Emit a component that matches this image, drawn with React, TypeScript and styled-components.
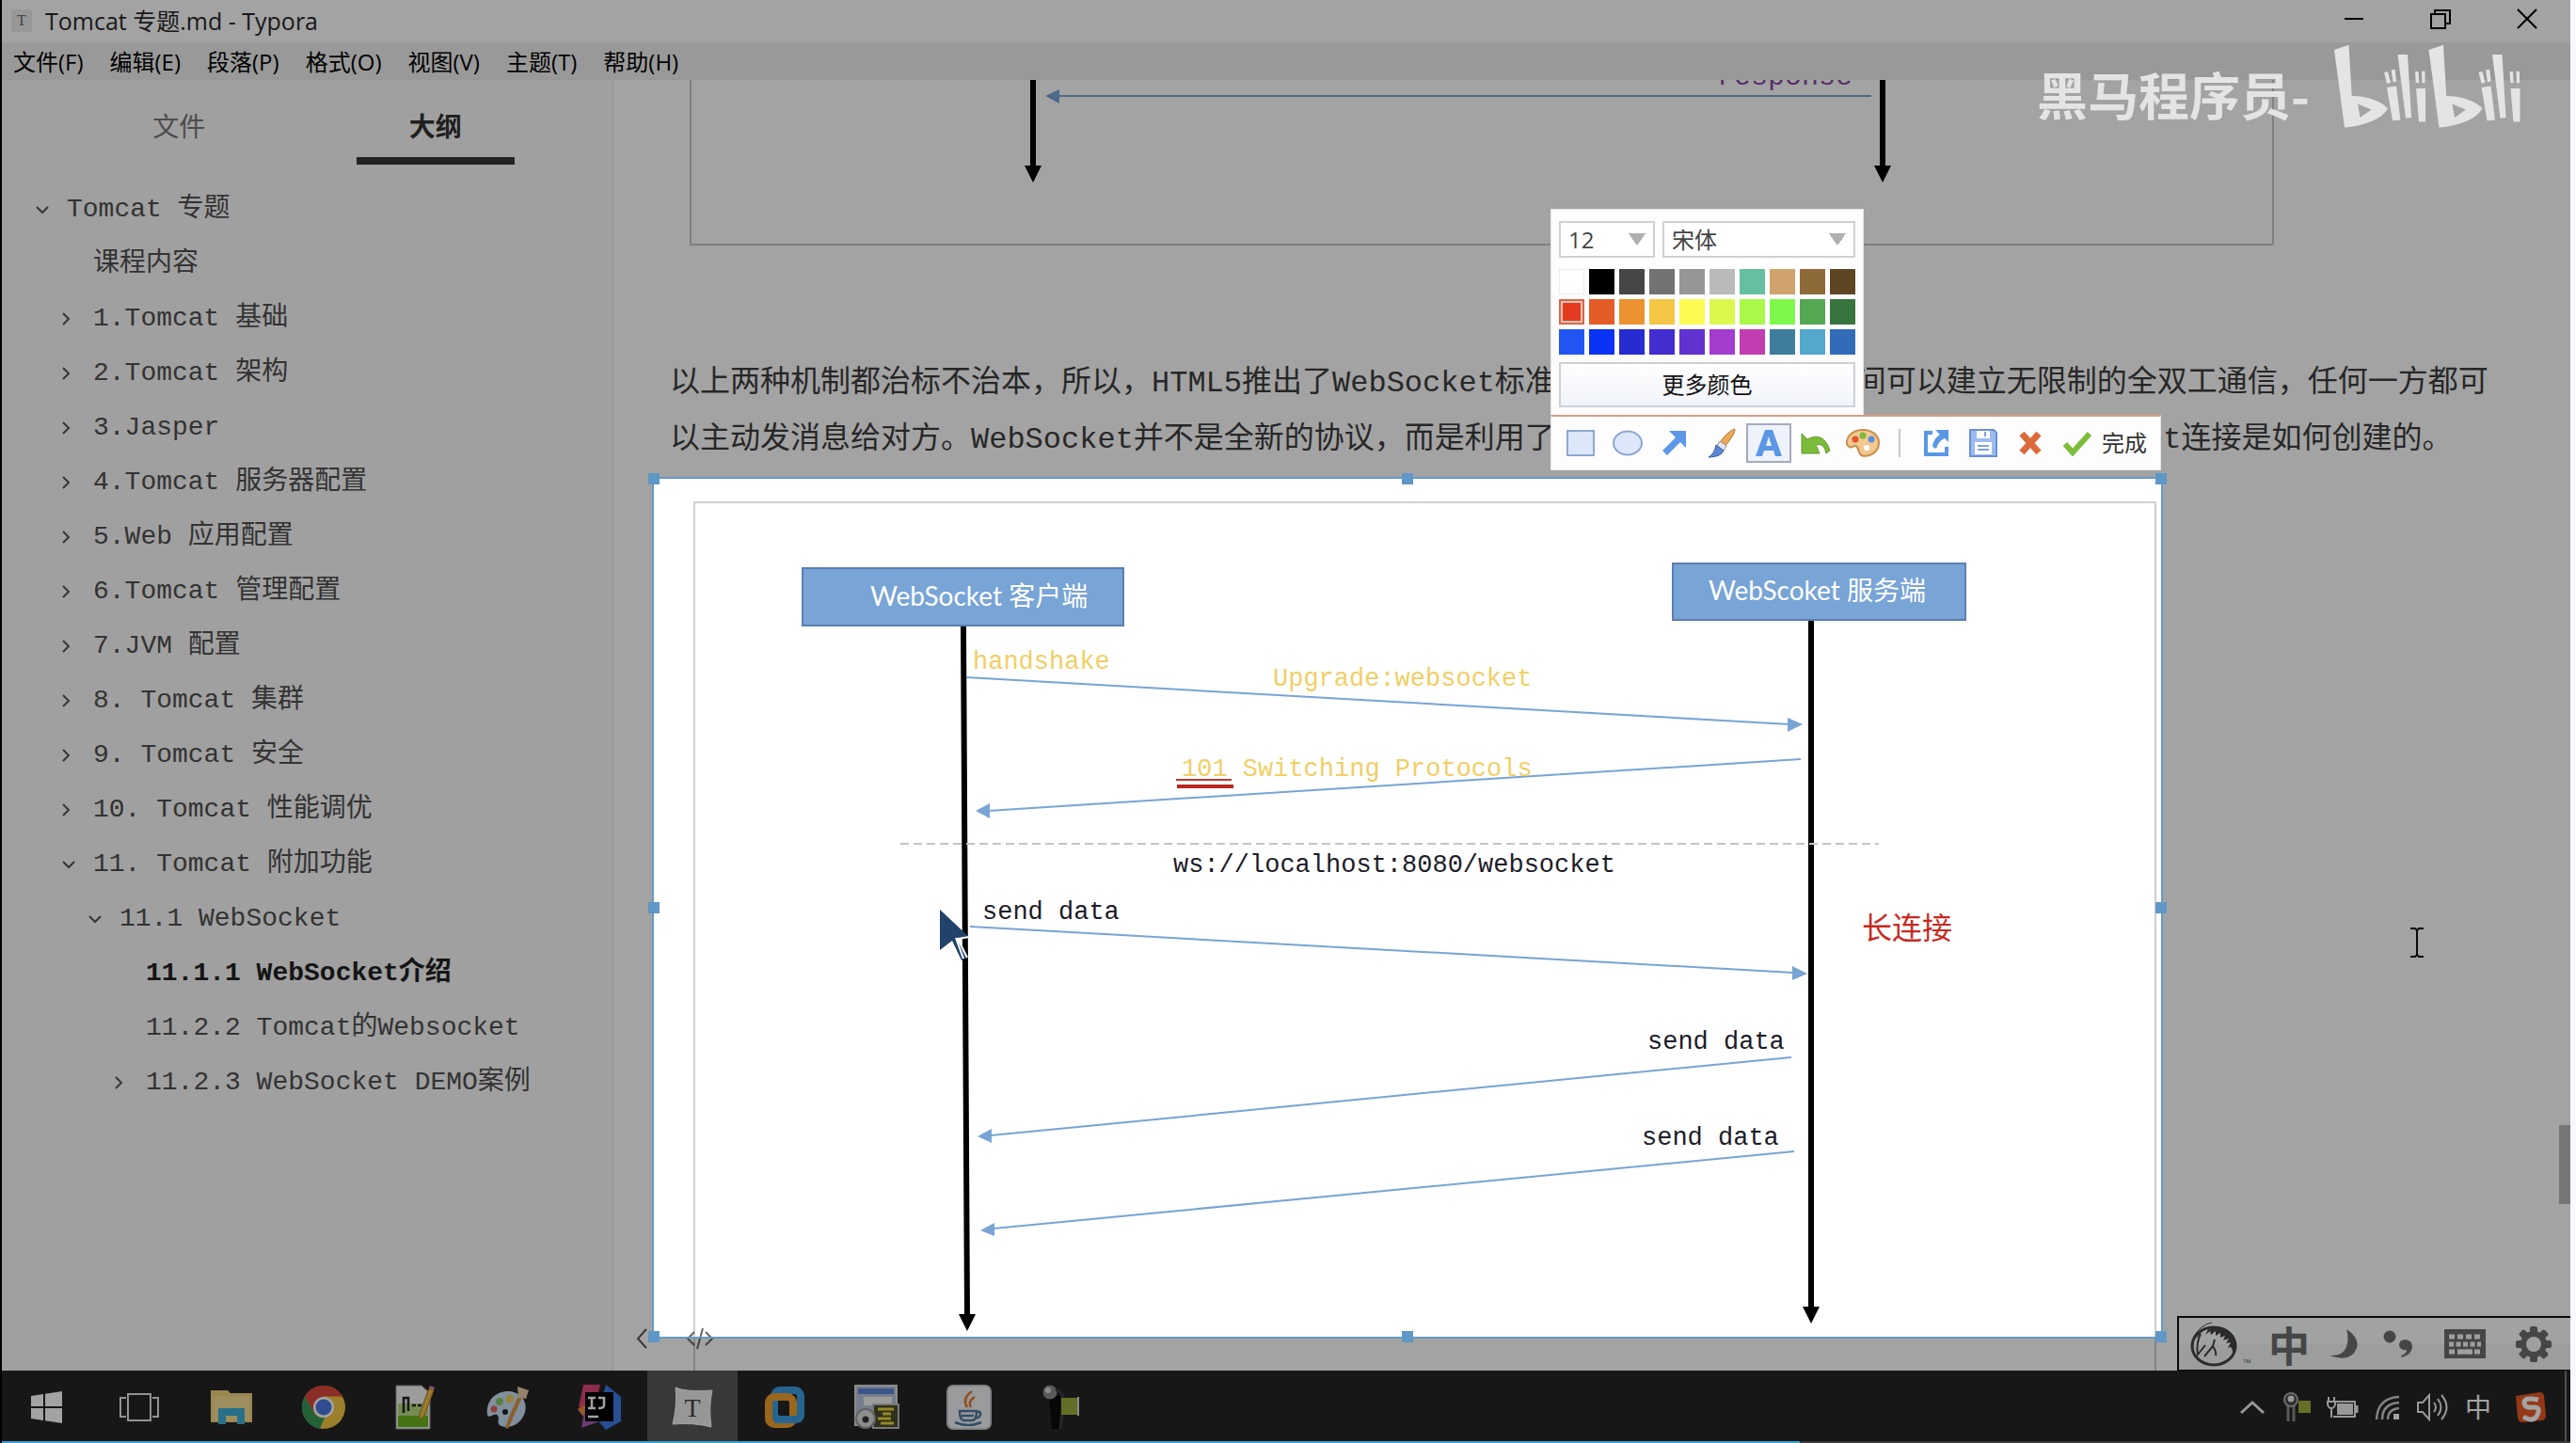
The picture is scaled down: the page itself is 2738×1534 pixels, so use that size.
import React from 'react';
import styled, { createGlobalStyle, css } from 'styled-components';

const UI = `"Open Sans", "Noto Sans CJK SC", sans-serif`;
const MONO = `"Liberation Mono", "Noto Sans CJK SC", monospace`;
const BLUE = '#78a4d6';
const INK = '#1c1c28';
const GOLD = '#f0cf66';

const Global = createGlobalStyle`
  * { box-sizing: border-box; }
  body { margin: 0; font-family: ${UI}; }
  button { border: 0; padding: 0; margin: 0; background: none; font: inherit; color: inherit; }
  svg { display: block; flex: none; }
`;

/* ---------- frame ---------- */

const Desktop = styled.div`
  position: relative;
  display: flex;
  flex-direction: column;
  height: 100vh;
  overflow: hidden;
  background: #fff;
  border-left: 2px solid #000;
  border-right: 6px solid #f8f9fd;
`;

const TitleBar = styled.header`
  display: flex;
  align-items: flex-start;
  height: 45px;
  padding-left: 10px;
  background: #fff;
  flex: none;
`;

const AppMark = styled.span`
  width: 22px;
  height: 24px;
  margin: 10px 14px 0 0;
  border-radius: 3px;
  background: #ececec;
  color: #666;
  font: 16px/24px "Liberation Serif", serif;
  text-align: center;
`;

const Title = styled.h1`
  flex: 1;
  margin: 0;
  font-size: 25px;
  line-height: 45px;
  font-weight: 400;
  color: #2a2a2a;
`;

const WindowButton = styled.button`
  display: flex;
  justify-content: center;
  align-items: center;
  width: 92px;
  height: 40px;
`;

const MenuBar = styled.nav`
  display: flex;
  flex: none;
  height: 40px;
  background: #f0f0f0;
`;

const MenuItem = styled.button`
  padding: 2px 16px 0 12px;
  font-size: 24px;
  line-height: 38px;
  color: #000;
`;

const Workspace = styled.div`
  display: flex;
  flex: 1;
  min-height: 0;
`;

/* ---------- sidebar ---------- */

const Sidebar = styled.aside`
  flex: none;
  width: 650px;
  background: #fafafa;
  border-right: 1px solid #e4e4e4;
`;

const Tabs = styled.div`
  display: flex;
  height: 109px;
  padding: 0 52px;
`;

const Tab = styled.button<{ $on?: boolean }>`
  display: flex;
  flex: 1;
  flex-direction: column;
  align-items: center;
  padding-top: 28px;
  font-size: 28px;
  line-height: 42px;
  font-weight: ${(p) => (p.$on ? 700 : 400)};
  color: ${(p) => (p.$on ? '#333' : '#777')};
  &::after {
    content: '';
    width: 168px;
    height: 8px;
    margin-top: 12px;
    background: ${(p) => (p.$on ? '#383838' : 'transparent')};
  }
`;

const Outline = styled.ul`
  margin: 0;
  padding: 0;
  list-style: none;
`;

const OutlineRow = styled.li<{ $level: number; $on?: boolean }>`
  display: flex;
  align-items: center;
  height: 58px;
  padding-left: ${(p) => 36 + p.$level * 28}px;
  font-family: ${MONO};
  font-size: 28px;
  line-height: 40px;
  white-space: pre;
  color: ${(p) => (p.$on ? '#222' : '#505050')};
  font-weight: ${(p) => (p.$on ? 700 : 400)};
`;

const Twisty = styled.span`
  width: 33px;
  height: 14px;
  flex: none;
`;

const RowLink = styled.a`
  color: inherit;
  text-decoration: none;
`;

/* ---------- document ---------- */

const Page = styled.main`
  position: relative;
  flex: 1;
  min-width: 0;
  padding: 0 50px 0 60px;
  overflow: hidden;
`;

const TopFigure = styled.figure`
  width: 1684px;
  height: 176px;
  margin: 0 0 117px 21px;
  border: 2px solid #c8c8c8;
  border-top: 0;
`;

const Paragraph = styled.p`
  margin: 0 0 35px;
  font-family: ${MONO};
  font-size: 32px;
  line-height: 60px;
  color: #3e3e3e;
`;

const MainFigure = styled.figure`
  width: 1555px;
  margin: 0 0 0 25px;
  border: 2px solid #cfcfcf;
`;

const BoxLabel = styled.text`
  font-family: "Lato", "Noto Sans CJK SC", sans-serif;
  font-size: 28px;
  fill: #fff;
`;

const Message = styled.text<{ $big?: boolean }>`
  font-family: ${MONO};
  font-size: ${(p) => (p.$big ? 30 : 27)}px;
  white-space: pre;
`;

const Note = styled.text`
  font-family: "Noto Sans CJK SC", sans-serif;
  font-size: 32px;
  fill: #c8291f;
`;

const PageTools = styled.div`
  position: absolute;
  left: 24px;
  bottom: 22px;
  display: flex;
  gap: 41px;
`;

const Track = styled.div`
  display: flex;
  flex: none;
  flex-direction: column;
  width: 12px;
  &::before { content: ''; flex: 1111; }
  &::after { content: ''; flex: 177; }
`;

const Thumb = styled.div`
  height: 84px;
  background: #b9b9b9;
`;

/* ---------- taskbar ---------- */

const Taskbar = styled.footer`
  display: flex;
  flex: none;
  align-items: stretch;
  height: 77px;
  background: #242424;
  color: #fff;
`;

const TaskList = styled.div`
  display: flex;
  flex: 1;
  gap: 2px;
`;

const TaskButton = styled.button<{ $on?: boolean }>`
  display: flex;
  justify-content: center;
  align-items: center;
  width: 96px;
  background: ${(p) => (p.$on ? '#585858' : 'none')};
`;

const Tray = styled.div`
  display: flex;
  padding-right: 4px;
`;

const TrayButton = styled.button<{ $wide?: boolean }>`
  display: flex;
  justify-content: center;
  align-items: center;
  width: ${(p) => (p.$wide ? 64 : 48)}px;
  font-size: 28px;
  line-height: 40px;
`;

const TrayEdge = styled.div`
  width: 2px;
  margin-left: 4px;
  background: #777;
`;

const ImeBar = styled.div`
  position: absolute;
  right: 0;
  bottom: 77px;
  display: grid;
  grid-template-columns: 88px 58px 58px 58px 84px 62px;
  height: 58px;
  padding-right: 8px;
  border: 2px solid #111;
  border-right: 0;
  border-bottom-width: 1px;
  background: linear-gradient(#fcfffe 50%, #f4f7f6 50%);
  color: #6c6e6e;
`;

const ImeButton = styled.button`
  display: flex;
  justify-content: center;
  align-items: center;
  gap: 5px;
  font: 700 44px/50px "Noto Sans CJK SC", sans-serif;
`;

const Trade = styled.span`
  align-self: flex-end;
  font: 11px/14px ${UI};
`;

const VideoProgress = styled.div`
  position: absolute;
  left: 0;
  right: 0;
  bottom: 0;
  height: 2px;
  background: linear-gradient(90deg, #3a9fd6 70%, #3c3c3c 70%);
`;

/* ---------- screenshot selection ---------- */

const Selection = styled.section`
  position: absolute;
  left: 691px;
  top: 507px;
  width: 1606px;
  height: 916px;
  border: 2px solid #6699c6;
  box-shadow: 0 0 0 3000px rgba(0, 0, 0, 0.36);
`;

const Handle = styled.i<{ $x: number; $y: number }>`
  position: absolute;
  left: ${(p) => p.$x}%;
  top: ${(p) => p.$y}%;
  width: 12px;
  height: 12px;
  margin: -6px;
  background: #5f97c6;
`;

const Tools = styled.div`
  position: absolute;
  right: 0;
  bottom: calc(100% + 9px);
  width: 649px;
`;

const StylePanel = styled.div`
  display: flex;
  flex-direction: column;
  width: 333px;
  padding: 12px 8px 8px;
  background: #fdfdfe;
  border: 1px solid #e6e6e6;
  border-bottom: 0;
`;

const Pickers = styled.div`
  display: grid;
  grid-template-columns: 102px 1fr;
  gap: 8px;
  margin-bottom: 12px;
`;

const Picker = styled.select`
  appearance: none;
  height: 39px;
  padding: 0 8px;
  border: 2px solid #cfd1d6;
  border-radius: 0;
  font: 24px/34px ${UI};
  color: #444;
  background:
    linear-gradient(to bottom right, #aeb0b2 50%, transparent 51%) right 8px center / 9px 13px no-repeat,
    linear-gradient(to bottom left, #aeb0b2 50%, transparent 51%) right 17px center / 9px 13px no-repeat,
    #fff;
`;

const Swatches = styled.div`
  display: grid;
  grid-template-columns: repeat(10, 27px);
  gap: 5px;
  margin-bottom: 8px;
`;

const Swatch = styled.input<{ $c: string }>`
  appearance: none;
  width: 27px;
  height: 27px;
  margin: 0;
  background: ${(p) => p.$c};
  ${(p) =>
    p.$c === '#ffffff' &&
    css`
      border: 1px solid #ececf0;
    `}
  &:checked {
    border: 2px solid #d9664a;
    box-shadow: inset 0 0 0 2px #f3c4b6;
  }
`;

const MoreColors = styled.button`
  height: 48px;
  border: 2px solid #cdd0d6;
  background: linear-gradient(#fff, #f1f4fa);
  font-size: 24px;
  line-height: 42px;
  color: #111;
`;

const ToolRow = styled.div`
  display: flex;
  align-items: center;
  gap: 2px;
  height: 59px;
  padding: 0 6px 0 7px;
  border: 1px solid #e6e6e6;
  border-top: 2px solid #dc9c84;
  background: #fdfdfe;
`;

const ToolButton = styled.button<{ $on?: boolean }>`
  display: flex;
  flex: none;
  justify-content: center;
  align-items: center;
  gap: 10px;
  min-width: 48px;
  height: 42px;
  padding: 0;
  border: 2px solid ${(p) => (p.$on ? '#a3abbd' : 'transparent')};
  background: ${(p) => (p.$on ? '#eef2fa' : 'none')};
  font-size: 24px;
  line-height: 36px;
  color: #333;
`;

const ToolRule = styled.i`
  width: 2px;
  height: 30px;
  margin: 0 12px;
  background: #c6c8cc;
`;

const Done = styled(ToolButton)`
  padding-left: 6px;
`;

const Watermark = styled.div`
  position: absolute;
  right: 52px;
  top: 47px;
  display: flex;
  align-items: flex-start;
  gap: 26px;
  font: 700 54px/56px "Noto Sans CJK SC", sans-serif;
  color: #e4e4e4;
`;

const Channel = styled.span`
  padding-top: 25px;
`;

const Pointer = styled.svg`
  position: absolute;
  left: 304px;
  top: 458px;
`;

const Caret = styled.svg`
  position: absolute;
  left: 2560px;
  top: 986px;
`;

/* ---------- data ---------- */

const MENUS = ['文件(F)', '编辑(E)', '段落(P)', '格式(O)', '视图(V)', '主题(T)', '帮助(H)'];

type Row = { text: string; level: number; fold?: 'open' | 'shut'; on?: boolean };
const ROWS: Row[] = [
  { text: 'Tomcat 专题', level: 0, fold: 'open' },
  { text: '课程内容', level: 1 },
  { text: '1.Tomcat 基础', level: 1, fold: 'shut' },
  { text: '2.Tomcat 架构', level: 1, fold: 'shut' },
  { text: '3.Jasper', level: 1, fold: 'shut' },
  { text: '4.Tomcat 服务器配置', level: 1, fold: 'shut' },
  { text: '5.Web 应用配置', level: 1, fold: 'shut' },
  { text: '6.Tomcat 管理配置', level: 1, fold: 'shut' },
  { text: '7.JVM 配置', level: 1, fold: 'shut' },
  { text: '8. Tomcat 集群', level: 1, fold: 'shut' },
  { text: '9. Tomcat 安全', level: 1, fold: 'shut' },
  { text: '10. Tomcat 性能调优', level: 1, fold: 'shut' },
  { text: '11. Tomcat 附加功能', level: 1, fold: 'open' },
  { text: '11.1 WebSocket', level: 2, fold: 'open' },
  { text: '11.1.1 WebSocket介绍', level: 3, on: true },
  { text: '11.2.2 Tomcat的Websocket', level: 3 },
  { text: '11.2.3 WebSocket DEMO案例', level: 3, fold: 'shut' },
];

const COLORS = [
  '#ffffff', '#000000', '#464646', '#727272', '#969696', '#bababa', '#67bfa2', '#d0a26c', '#8e6a38', '#5e4622',
  '#e43a20', '#e45c28', '#ec9232', '#f4c644', '#fdfa54', '#dcf84e', '#aaf84a', '#7ef84a', '#54a852', '#38743e',
  '#2256f4', '#0a32f4', '#262cd0', '#422ecf', '#6032cf', '#a43cd0', '#c23eb2', '#3c7e9c', '#54a8cb', '#326cb8',
];

/* ---------- drawings ---------- */

const Chevron = ({ open }: { open: boolean }) => (
  <svg width="14" height="14" viewBox="0 0 14 14" fill="none" stroke="#555" strokeWidth="2">
    <path d={open ? 'M1 4l6 6 6-6' : 'M1 1l6 6-6 6'} />
  </svg>
);

const TopDiagram = () => (
  <svg width="1680" height="174" viewBox="735 85 1680 174">
    <Message $big x="1825" y="90" fill="#8a4aa8">response</Message>
    <g stroke="#000" strokeWidth="6">
      <path d="M1098 85V178M2001 85V178" />
    </g>
    <path d="M1089 176h18l-9 18zM1992 176h18l-9 18z" />
    <path d="M1124 102H1989" stroke={BLUE} strokeWidth="2" />
    <path d="M1111 102l15-7v15z" fill={BLUE} />
  </svg>
);

const SocketDiagram = () => (
  <svg width="1551" height="980" viewBox="739 535 1551 980">
    <g stroke="#000" strokeWidth="6">
      <path d="M1024 666L1028 1399M1925 659V1392" />
    </g>
    <path d="M1019 1397h18l-9 18zM1916 1389h18l-9 18z" />
    <g fill={BLUE} stroke="#5b7fb0" strokeWidth="2">
      <path d="M853 604h341v61H853zM1778 599h311v60H1778z" />
    </g>
    <BoxLabel x="925" y="644">WebSocket 客户端</BoxLabel>
    <BoxLabel x="1816" y="638">WebScoket 服务端</BoxLabel>
    <g stroke={BLUE} strokeWidth="2">
      <path d="M1027 720L1902 770M1914 807L1050 862M1031 985L1906 1034M1904 1124L1053 1207M1907 1224L1056 1306" />
    </g>
    <g fill={BLUE}>
      <path d="M1916 770l-16-7v15zM1037 862l15-8v16zM1921 1035l-16-8v15zM1039 1208l15-8v15zM1042 1308l15-8v14z" />
    </g>
    <path d="M957 897H1997" stroke="#c4c4c4" strokeWidth="2" strokeDasharray="9 5" />
    <Message x="1034" y="711" fill={GOLD}>handshake</Message>
    <Message x="1353" y="729" fill={GOLD}>Upgrade:websocket</Message>
    <Message x="1256" y="825" fill={GOLD}>101 Switching Protocols</Message>
    <path d="M1250 829h59" stroke="#c0392f" strokeWidth="2" />
    <path d="M1251 836h60" stroke="#b8281f" strokeWidth="4" />
    <Message x="1247" y="927" fill={INK}>ws://localhost:8080/websocket</Message>
    <Message x="1044" y="977" fill={INK}>send data</Message>
    <Message x="1751" y="1115" fill={INK}>send data</Message>
    <Message x="1745" y="1217" fill={INK}>send data</Message>
    <Note x="1979" y="998">长连接</Note>
  </svg>
);

const Bili = () => (
  <svg width="199" height="90" viewBox="0 0 199 90" fill="#e4e4e4" role="img" aria-label="bilibili">
    {[0, 100.5].map((dx) => (
      <g key={dx} transform={`translate(${dx} 0)`}>
        <path fillRule="evenodd" d="M0 6L15.500 .7L18.700 55C36 55 50 61 57 68C52 79 32 87 11 88.500ZM25 63.500L27.500 78L39.500 69.500Z" />
        <path d="M56 46l10-1.500 4.400 36-8.400.8zM53 30l4-1 3 12-4 .8zM60.600 27.500l4-.8 1.500 13-3.600.4zM67.500 11h10.500l4 67-6 .8zM87 47h10v35.500h-7zM86 29h3.500l.6 12h-3.300zM93 28.700h3.500v12.500h-3z" />
      </g>
    ))}
  </svg>
);

const Gear = () => (
  <svg width="38" height="38" viewBox="0 0 38 38">
    <g fill="currentColor">
      {[0, 45, 90, 135].map((a) => (
        <rect key={a} x="15" y="0" width="8" height="38" rx="2" transform={`rotate(${a} 19 19)`} />
      ))}
      <circle cx="19" cy="19" r="14" />
    </g>
    <circle cx="19" cy="19" r="8" fill="#f8fbfa" />
  </svg>
);

const TASKS: { name: string; on?: boolean; art: React.ReactNode }[] = [
  {
    name: '开始',
    art: <svg width="34" height="34" viewBox="0 0 34 34" fill="#fff"><path d="M0 5l13-2v13H0zM15 2.700L33 0v16H15zM0 18h13v13L0 29zM15 18h18v16l-18-2.700z" /></svg>,
  },
  {
    name: '任务视图',
    art: <svg width="42" height="30" viewBox="0 0 42 30" fill="none" stroke="#e4e4e4" strokeWidth="2"><path d="M9 1h24v28H9zM7 5H1v20h6M35 5h6v20h-6" /></svg>,
  },
  {
    name: '文件资源管理器',
    art: <svg width="44" height="38" viewBox="0 0 44 38"><path d="M0 4V1h18l3 3h23v31H0z" fill="#f0d27c" /><path d="M2 7h40v26H2z" fill="#f7df94" /><path d="M8 20h28v17h-8V28H16v9H8z" fill="#3fb0d8" /></svg>,
  },
  {
    name: 'Chrome',
    art: <svg width="46" height="46" viewBox="0 0 46 46"><circle cx="23" cy="23" r="23" fill="#f2c744" /><path d="M3 11.500A23 23 0 0 1 43 11.500H23L13 29z" fill="#d9483b" /><path d="M3 11.500L13 29q4 6 11 5l-5 11.800A23 23 0 0 1 3 11.500z" fill="#38995a" /><circle cx="23" cy="23" r="11" fill="#fff" /><circle cx="23" cy="23" r="8.500" fill="#4a78e0" /></svg>,
  },
  {
    name: 'Notepad++',
    art: <svg width="44" height="48" viewBox="0 0 44 48"><path d="M1 1h27l9 8v38H1z" fill="#f4f4f4" stroke="#999" /><path d="M3 32h32v13H3z" fill="#6cb81e" /><path d="M3 20h32v13H3z" fill="#b8dc84" /><path d="M9 30V14h5v14M18 22h4M24 22h4" fill="none" stroke="#222" strokeWidth="2.500" /><path d="M26 31l10-27 5 2-10 27-5 5z" fill="#eebf45" stroke="#a6762a" /><path d="M36 4l1-3 5 2-1 3z" fill="#d98a9a" /></svg>,
  },
  {
    name: '画图',
    art: <svg width="48" height="48" viewBox="0 0 48 48"><path d="M2 32C0 16 12 6 26 7c14 2 20 14 15 25-4 10-15 15-24 12-7-3 0-9-5-12-4-2-8 5-10 0z" fill="#c8e2f4" /><circle cx="9" cy="26" r="3.500" fill="#e0675c" /><circle cx="15" cy="18" r="4" fill="#8cc86a" /><circle cx="26" cy="15" r="4.500" fill="#f0d060" /><circle cx="21" cy="29" r="3" fill="#242424" /><path d="M36 10l4 1-16 36-3-1 4-12z" fill="#dc9448" /><path d="M34 2l12 4-3 9-8-1z" fill="#e8cda4" /></svg>,
  },
  {
    name: 'IntelliJ IDEA',
    art: <svg width="48" height="48" viewBox="0 0 48 48"><path d="M6 0h18l-6 24H1z" fill="#e0447a" /><path d="M0 26l10-6 4 12-8 2z" fill="#f08a3c" /><path d="M4 46l4-22 18 14z" fill="#b05ab8" /><path d="M30 0l16 13v26l-16 9-10-12z" fill="#3c7ce8" /><rect x="8" y="8" width="30" height="31" fill="#000" /><path d="M11 14h8m-4 0v11m-4 0h8M22 14h6v8q0 3-6 3M11 34h11" fill="none" stroke="#fff" strokeWidth="2.500" /></svg>,
  },
  {
    name: 'Typora',
    on: true,
    art: <svg width="44" height="44" viewBox="0 0 44 44"><path d="M4 1q10 5 39 3-4 18-1 39-18-5-41-3 5-20 3-39z" fill="#ededed" stroke="#fff" /><text x="22" y="32" textAnchor="middle" fontFamily="Liberation Serif, serif" fontSize="28" fill="#444">T</text></svg>,
  },
  {
    name: 'VMware',
    art: <svg width="44" height="46" viewBox="0 0 44 46" fill="none" strokeWidth="8"><rect x="11" y="5" width="28" height="31" rx="6" stroke="#3c9fe0" /><rect x="5" y="12" width="26" height="29" rx="6" stroke="#f0a02c" /><path d="M11 36h22q6 0 6-6V14" stroke="#3c9fe0" /></svg>,
  },
  {
    name: '安装程序',
    art: <svg width="48" height="48" viewBox="0 0 48 48"><path d="M1 1h44v42H1z" fill="#b9c4dc" stroke="#dcdcdc" strokeWidth="2" /><path d="M4 4h38v6H4z" fill="#5f86d8" /><path d="M10 13h30v9H10z" fill="#f4f4f4" /><path d="M20 21h27v25H20z" fill="#4c4c30" stroke="#bbb" strokeWidth="2" /><path d="M25 26h17M30 31h9M25 36h14M28 41h14" stroke="#e8d83c" strokeWidth="3" /><circle cx="12" cy="36" r="10" fill="#ddd" stroke="#999" strokeWidth="2" /><circle cx="12" cy="37" r="3.500" fill="#333" /></svg>,
  },
  {
    name: 'Java',
    art: <svg width="48" height="48" viewBox="0 0 48 48"><rect x="1" y="1" width="46" height="46" rx="6" fill="#f0f2f4" stroke="#c8ccd0" strokeWidth="2" /><g fill="none" strokeWidth="2.500"><path d="M27 7q-11 8-5 17M30 13q-8 5-4 11" stroke="#e07a34" /><path d="M14 28h18q0 9-4 10H18q-4-1-4-10zM32 29q5-1 4 3t-6 3M9 40q14 6 28 0M16 33h13" stroke="#50789e" /></g></svg>,
  },
  {
    name: '录音机',
    art: <svg width="40" height="48" viewBox="0 0 40 48"><path d="M7 14l12-3-1 36h-8z" fill="#0c0c0c" /><circle cx="8" cy="8" r="7.500" fill="#8c8c8c" /><circle cx="6" cy="6" r="3" fill="#dcdcdc" /><path d="M14 5q10 3 8 20l-3 22" fill="none" stroke="#3c3c3c" strokeWidth="3" /><rect x="20" y="14" width="18" height="18" fill="#9cae3c" /><path d="M38 13v20" stroke="#ddd" strokeWidth="2" /></svg>,
  },
];

const TRAY: { name: string; art: React.ReactNode }[] = [
  { name: '显示隐藏的图标', art: <svg width="26" height="16" viewBox="0 0 26 16" fill="none" stroke="#eee" strokeWidth="3"><path d="M1 14L13 3l12 11" /></svg> },
  { name: '录音', art: <svg width="32" height="32" viewBox="0 0 32 32"><rect x="17" y="9" width="13" height="13" fill="#a3ae3e" /><path d="M6 14v17M12 14v17" stroke="#8c8c8c" strokeWidth="3" /><circle cx="9" cy="8" r="7" fill="#444" stroke="#aaa" strokeWidth="2" /><circle cx="9" cy="7" r="3.500" fill="#eee" /></svg> },
  { name: '电池', art: <svg width="34" height="24" viewBox="0 0 34 24" fill="none" stroke="#eee" strokeWidth="2"><path d="M10 6h20v16H7M5 12v11M2 1v5M8 1v5M1 6h8v3q-1 4-4 4t-4-4z" /><path d="M12 9h15v10H12z" fill="#eee" /><path d="M32 10v8" strokeWidth="3" /></svg> },
  { name: '网络', art: <svg width="28" height="28" viewBox="0 0 28 28" fill="none" stroke="#ccc" strokeWidth="2.500"><path d="M2 27Q3 4 26 3M8 27Q8 10 26 9M14 27Q14 16 26 15" /><rect x="20" y="21" width="6" height="6" fill="#fff" stroke="none" /></svg> },
  { name: '音量', art: <svg width="34" height="30" viewBox="0 0 34 30" fill="none" stroke="#eee" strokeWidth="2"><path d="M1 10h5l7-8v26l-7-8H1zM18 10q4 5 0 10M22 6q7 9 0 18M26 2q11 13 0 26" /></svg> },
];

const Arrow = () => (
  <svg width="28" height="28" viewBox="0 0 28 28"><path d="M8 1h18v18l-6-6L6 27l-5-5L15 8z" fill="#5b97e6" /></svg>
);

export default function App() {
  return (
    <>
      <Global />
      <Desktop>
        <TitleBar>
          <AppMark>T</AppMark>
          <Title>Tomcat 专题.md - Typora</Title>
          <WindowButton aria-label="最小化">
            <svg width="22" height="22" viewBox="0 0 22 22"><path d="M1 11h20" stroke="#000" strokeWidth="2" /></svg>
          </WindowButton>
          <WindowButton aria-label="还原">
            <svg width="22" height="22" viewBox="0 0 22 22" fill="none" stroke="#000" strokeWidth="2"><path d="M1 6h15v15H1zM5 6V2h16v14h-5" /></svg>
          </WindowButton>
          <WindowButton aria-label="关闭">
            <svg width="22" height="22" viewBox="0 0 22 22" stroke="#000" strokeWidth="2"><path d="M1 1l20 20M21 1L1 21" /></svg>
          </WindowButton>
        </TitleBar>
        <MenuBar>
          {MENUS.map((m) => (
            <MenuItem key={m}>{m}</MenuItem>
          ))}
        </MenuBar>

        <Workspace>
          <Sidebar>
            <Tabs>
              <Tab>文件</Tab>
              <Tab $on>大纲</Tab>
            </Tabs>
            <Outline>
              {ROWS.map((r) => (
                <OutlineRow key={r.text} $level={r.level} $on={r.on}>
                  <Twisty>{r.fold && <Chevron open={r.fold === 'open'} />}</Twisty>
                  <RowLink href="#">{r.text}</RowLink>
                </OutlineRow>
              ))}
            </Outline>
          </Sidebar>
          <Page>
            <TopFigure><TopDiagram /></TopFigure>
            <Paragraph>
              以上两种机制都治标不治本，所以，HTML5推出了WebSocket标准，使浏览器和服务器之间可以建立无限制的全双工通信，任何一方都可以主动发消息给对方。WebSocket并不是全新的协议，而是利用了HTTP协议来建立连接。我们来看看WebSocket连接是如何创建的。
            </Paragraph>
            <MainFigure><SocketDiagram /></MainFigure>
            <PageTools>
              <svg width="12" height="24" viewBox="0 0 12 24" fill="none" stroke="#555" strokeWidth="2"><path d="M11 2L2 12l9 10" /></svg>
              <svg width="30" height="24" viewBox="0 0 30 24" fill="none" stroke="#666" strokeWidth="2"><path d="M9 5L2 12l7 7M21 5l7 7-7 7M18 1l-6 22" /></svg>
            </PageTools>
          </Page>
          <Track><Thumb /></Track>
        </Workspace>

        <Taskbar>
          <TaskList>
            {TASKS.map((t) => (
              <TaskButton key={t.name} aria-label={t.name} $on={t.on}>{t.art}</TaskButton>
            ))}
          </TaskList>
          <Tray>
            {TRAY.map((t) => (
              <TrayButton key={t.name} aria-label={t.name}>{t.art}</TrayButton>
            ))}
            <TrayButton>中</TrayButton>
            <TrayButton $wide aria-label="搜狗输入法">
              <svg width="34" height="34" viewBox="0 0 34 34">
                <path d="M1 5L27 1q3 0 4 4l2 22q-1 3-4 4L8 33q-4 0-5-5z" fill="#e85a24" />
                <path d="M25 9Q10 6 10 12t9 5 5 8-15 2" fill="none" stroke="#fff" strokeWidth="5" />
              </svg>
            </TrayButton>
            <TrayEdge />
          </Tray>
        </Taskbar>

        <ImeBar>
          <ImeButton aria-label="输入法">
            <svg width="52" height="50" viewBox="0 0 52 50" fill="none" stroke="#444">
              <ellipse cx="26" cy="27" rx="23" ry="20" strokeWidth="3" />
              <path d="M4 18Q12 4 24 2M8 18Q14 8 24 6" strokeWidth="1" />
              <path d="M20 9Q38 3 47 16q5 12-1 20 0-7-2-8l-3 1 3-6-5 1 3-5-6 2 2-5-5 2v-5l-5 3v-5l-5 4-1-4-5 4z" fill="#444" stroke="none" />
              <path d="M12 14Q7 24 9 36l8-10M16 38l9-11q4 6 3 10M25 27l2-7" strokeWidth="2" />
            </svg>
            <Trade>™</Trade>
          </ImeButton>
          <ImeButton>中</ImeButton>
          <ImeButton aria-label="半角">
            <svg width="30" height="32" viewBox="0 0 30 32" fill="currentColor"><path d="M18 0q14 9 11 20Q23 36 0 28q14 1 18-9 3-9 0-19z" /></svg>
          </ImeButton>
          <ImeButton aria-label="标点">
            <svg width="32" height="30" viewBox="0 0 32 30" fill="currentColor"><circle cx="7" cy="7" r="6.500" /><path d="M17 16q0-6 7-6 7 1 7 8-1 8-11 11l-1-2q6-2 6-6-7 1-8-5z" /></svg>
          </ImeButton>
          <ImeButton aria-label="软键盘">
            <svg width="44" height="31" viewBox="0 0 44 31">
              <rect width="44" height="31" fill="currentColor" />
              <path d="M5 8h34M5 24h34" stroke="#f8fbfa" strokeWidth="5" strokeDasharray="6 3" />
              <path d="M5 16h34" stroke="#f8fbfa" strokeWidth="5" strokeDasharray="5 2.500" />
              <path d="M14 24h16" stroke="#f8fbfa" strokeWidth="5" />
            </svg>
          </ImeButton>
          <ImeButton aria-label="设置"><Gear /></ImeButton>
        </ImeBar>
        <Caret width="14" height="32" viewBox="0 0 14 32" fill="none" stroke="#111" strokeWidth="2"><path d="M0 1h5l2 2 2-2h5M7 2v28M0 31h5l2-2 2 2h5" /></Caret>

        <Selection aria-label="截图选区">
          {[[0, 0], [50, 0], [100, 0], [0, 50], [100, 50], [0, 100], [50, 100], [100, 100]].map(([x, y]) => (
            <Handle key={`${x}-${y}`} $x={x} $y={y} />
          ))}
          <Pointer width="34" height="56" viewBox="0 0 34 56">
            <path d="M0 0L31 29 19 31 29 51 23 54 13 33 0 43z" fill="#23426a" />
            <path d="M31 29L19 31l10 20M17 30l8 22" fill="none" stroke="#fff" strokeWidth="2" />
          </Pointer>
          <Tools>
            <StylePanel>
              <Pickers>
                <Picker aria-label="字号"><option>12</option></Picker>
                <Picker aria-label="字体"><option>宋体</option></Picker>
              </Pickers>
              <Swatches>
                {COLORS.map((c) => (
                  <Swatch key={c} type="radio" name="color" aria-label={c} $c={c} defaultChecked={c === '#e43a20'} />
                ))}
              </Swatches>
              <MoreColors>更多颜色</MoreColors>
            </StylePanel>
            <ToolRow>
              <ToolButton aria-label="矩形">
                <svg width="30" height="28" viewBox="0 0 30 28"><rect x="1" y="1" width="28" height="26" fill="#dce8fa" stroke="#8fa6d4" strokeWidth="2" /></svg>
              </ToolButton>
              <ToolButton aria-label="椭圆">
                <svg width="34" height="28" viewBox="0 0 34 28"><ellipse cx="17" cy="14" rx="15" ry="12.500" fill="#dce8fa" stroke="#8fa6d4" strokeWidth="2" /></svg>
              </ToolButton>
              <ToolButton aria-label="箭头"><Arrow /></ToolButton>
              <ToolButton aria-label="画笔">
                <svg width="30" height="32" viewBox="0 0 30 32">
                  <path d="M29 1q1 4-10 18l-6-4Q23 2 29 1z" fill="#e8a858" stroke="#b87a3a" />
                  <path d="M13 14l7 5-3 5-7-5z" fill="#e4e6ea" stroke="#8a8e98" />
                  <path d="M9 18l8 6q-3 7-16 7 6-3 8-13z" fill="#5a86d4" stroke="#3c5ea0" />
                </svg>
              </ToolButton>
              <ToolButton $on aria-label="文字">
                <svg width="28" height="30" viewBox="0 0 28 30" fill="#5b97e6"><path fillRule="evenodd" d="M10 1h8l10 28h-7l-2-6H9l-2 6H0zM14 8l-3 10h6z" /></svg>
              </ToolButton>
              <ToolButton aria-label="撤销">
                <svg width="32" height="26" viewBox="0 0 32 26"><path d="M1 3l6 6Q24 0 31 21l-4 3q-2-12-11-9l4 9H1z" fill="#7dbb3a" stroke="#5f9a28" /></svg>
              </ToolButton>
              <ToolButton aria-label="颜色">
                <svg width="36" height="30" viewBox="0 0 36 30">
                  <path d="M18 1C7 1 0 8 1 16q3 6 8 2c5-1 3 6 7 10 8 3 19-3 19-13C35 6 27 1 18 1z" fill="#f2c890" stroke="#c98e4c" strokeWidth="2" />
                  <circle cx="10" cy="11" r="3.500" fill="#e2542c" /><circle cx="18" cy="7" r="3.500" fill="#7cb93c" /><circle cx="27" cy="11" r="3.500" fill="#5b8fe0" /><circle cx="22" cy="20" r="3" fill="#fff" />
                </svg>
              </ToolButton>
              <ToolRule />
              <ToolButton aria-label="分享">
                <svg width="28" height="30" viewBox="0 0 28 30"><path d="M10 4H3v23h22v-8" fill="none" stroke="#5b97e6" strokeWidth="4" /><path d="M13 1h14v13l-4-4q-7 3-9 11l-4-2q1-9 8-13z" fill="#5b97e6" /></svg>
              </ToolButton>
              <ToolButton aria-label="保存">
                <svg width="30" height="30" viewBox="0 0 30 30"><path d="M1 1h25l3 3v25H1z" fill="#9cbcf0" stroke="#6b90d4" strokeWidth="2" /><path d="M8 2h14v8H8zM6 14h18v13H6z" fill="#fff" /><path d="M17 3v5M9 18h12M9 22h12" stroke="#7fa2dc" strokeWidth="2" /></svg>
              </ToolButton>
              <ToolButton aria-label="取消">
                <svg width="26" height="28" viewBox="0 0 26 28"><path d="M4 4l18 20M22 4L4 24" stroke="#dc6a3a" strokeWidth="7" /></svg>
              </ToolButton>
              <Done>
                <svg width="32" height="28" viewBox="0 0 32 28"><path d="M3 15l8 9L29 4" fill="none" stroke="#7cbd3c" strokeWidth="6" /></svg>
                完成
              </Done>
            </ToolRow>
          </Tools>
        </Selection>

        <Watermark>
          <Channel>黑马程序员-</Channel>
          <Bili />
        </Watermark>
        <VideoProgress />
      </Desktop>
    </>
  );
}
